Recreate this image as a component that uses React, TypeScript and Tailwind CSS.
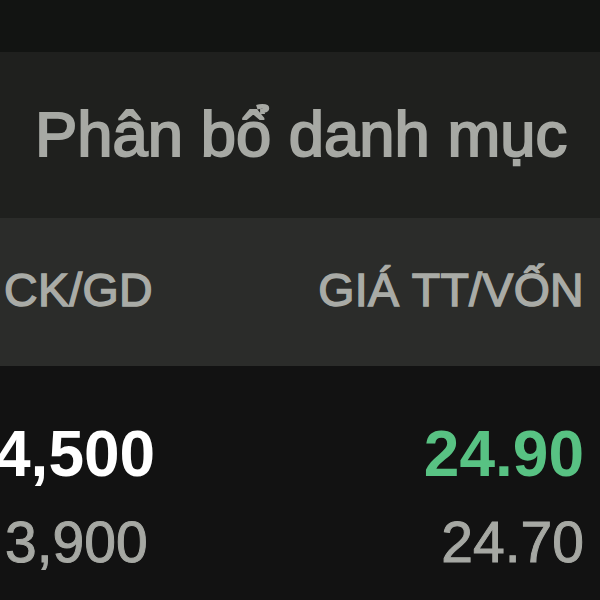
export default function App() {
  return (
    <div className="w-[600px] h-[600px] overflow-hidden bg-[#121312] flex flex-col font-['Liberation_Sans',Arial,sans-serif]">
      <div className="h-[52px] shrink-0 bg-[#121412]" />
      <div className="h-[166px] shrink-0 bg-[#1f201e] flex items-center pl-[35px]">
        <h1 className="text-[63.4px] leading-none text-[#a7a9a4] [-webkit-text-stroke:2px_#a7a9a4] whitespace-nowrap">
          Phân bổ danh mục
        </h1>
      </div>
      <div className="h-[148px] shrink-0 bg-[#2b2c2a] flex items-center justify-between pl-[4px] pr-[16px] pb-[4px]">
        <span className="text-[46.5px] leading-none tracking-[0.3px] text-[#a9aba6] [-webkit-text-stroke:1.4px_#a9aba6] whitespace-nowrap">CK/GD</span>
        <span className="text-[46.5px] leading-none tracking-[0.3px] text-[#a9aba6] [-webkit-text-stroke:1.4px_#a9aba6] whitespace-nowrap">GIÁ TT/VỐN</span>
      </div>
      <div className="flex-1 bg-[#121212] flex justify-between pr-[16px] pt-[56px]">
        <div className="flex flex-col gap-[28px]">
          <span className="text-[64px] leading-none font-bold text-white -ml-[5px] whitespace-nowrap">4,500</span>
          <span className="text-[57px] leading-none text-[#a6a8a3] [-webkit-text-stroke:1px_#a6a8a3] ml-[5px]">3,900</span>
        </div>
        <div className="flex flex-col items-end gap-[28px]">
          <span className="text-[64px] leading-none font-bold text-[#58c283]">24.90</span>
          <span className="text-[57px] leading-none text-[#a6a8a3] [-webkit-text-stroke:1px_#a6a8a3]">24.70</span>
        </div>
      </div>
    </div>
  );
}
